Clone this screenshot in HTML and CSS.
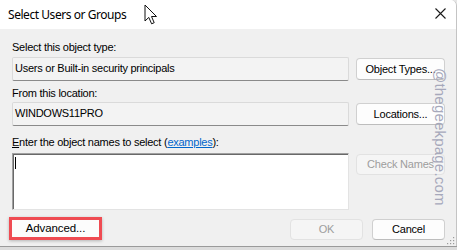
FILE: index.html
```html
<!DOCTYPE html>
<html>
<head>
<meta charset="utf-8">
<link rel="stylesheet" href="styles.css">
</head>
<body>
<div class="window">
  <div class="titlebar">
    <span class="title">Select Users or Groups</span>
    <svg class="close" width="11" height="11" viewBox="0 0 11 11"><path d="M0.5 0.5 L10.5 10.5 M10.5 0.5 L0.5 10.5" stroke="#1a1a1a" stroke-width="1.1" fill="none"/></svg>
  </div>
  <div class="content">
    <div class="label l1">Select this object type:</div>
    <div class="row">
      <div class="field">Users or Built-in security principals</div>
      <div class="btn">Object Types...</div>
    </div>
    <div class="label l2">From this location:</div>
    <div class="row">
      <div class="field">WINDOWS11PRO</div>
      <div class="btn">Locations...</div>
    </div>
    <div class="label l3"><span class="ak">E</span>nter the object names to select (<span class="link">examples</span>):</div>
    <div class="row">
      <div class="textarea"><span class="caret"></span></div>
      <div class="btn disabled">Check Names</div>
    </div>
    <div class="footer">
      <div class="hl"><div class="hl-btn">Advanced...</div></div>
      <div class="spacer"></div>
      <div class="btn small disabled">OK</div>
      <div class="btn small">Cancel</div>
    </div>
  </div>
  <div class="watermark">@thegeekpage.com</div>
  <svg class="cursor" width="14" height="22" viewBox="0 0 14 22"><path d="M1 1 L1 17 L4.8 13.4 L7.6 19.8 L10.2 18.7 L7.5 12.5 L12.5 12.5 Z" fill="#fff" stroke="#111" stroke-width="1" stroke-linejoin="round"/></svg>
  <svg class="grip" width="8" height="8" viewBox="0 0 8 8"><g fill="#9a9a9a"><rect x="6" y="0" width="1.2" height="1.2"/><rect x="3" y="3" width="1.2" height="1.2"/><rect x="6" y="3" width="1.2" height="1.2"/><rect x="0" y="6" width="1.2" height="1.2"/><rect x="3" y="6" width="1.2" height="1.2"/><rect x="6" y="6" width="1.2" height="1.2"/></g></svg>
</div>
<div class="below"></div>
</body>
</html>
```
FILE: styles.css
```css
html, body {
  margin: 0;
  padding: 0;
  width: 457px;
  height: 250px;
  overflow: hidden;
  background: #e6e6e6;
}
.window {
  position: relative;
  width: 456px;
  height: 246px;
  background: #f0f0f0;
  border-right: 1px solid #c4c4c4;
  border-top-right-radius: 6px;
  font-family: "Liberation Sans", Arial, sans-serif;
  font-size: 11px;
  color: #000;
  overflow: hidden;
}
.titlebar {
  height: 29px;
  background: #ffffff;
  display: flex;
  align-items: center;
  padding-left: 8px;
  padding-right: 10px;
  box-sizing: border-box;
}
.title {
  font-family: "Noto Sans", sans-serif;
  font-size: 12px;
  letter-spacing: -0.45px;
  flex: 1;
  margin-top: -1px;
}
.close {
  margin-right: 0px;
  margin-top: -2px;
}
.content {
  padding: 0 11px 0 12px;
  display: flex;
  flex-direction: column;
}
.label {
  height: 13px;
  line-height: 13px;
  letter-spacing: -0.25px;
  color: #000;
}
.l1 { margin-top: 12px; }
.l2 { margin-top: 6px; }
.l3 { margin-top: 10px; }
.ak { text-decoration: underline; }
.link { color: #0066cc; text-decoration: underline; }
.row {
  display: flex;
  align-items: flex-start;
  gap: 7px;
}
.l1 + .row { margin-top: 3px; }
.l2 + .row { margin-top: 2px; }
.l3 + .row { margin-top: 4px; }
.field {
  flex: 1;
  height: 24px;
  box-sizing: border-box;
  border: 1px solid #dadada;
  border-bottom: 1px solid #8a8a8a;
  border-radius: 2px;
  background: #f3f3f3;
  padding-left: 2px;
  line-height: 21px;
  letter-spacing: -0.25px;
}
.btn {
  width: 89px;
  height: 22px;
  margin-top: 1px;
  box-sizing: border-box;
  border: 1px solid #d0d0d0;
  border-bottom-color: #bdbdbd;
  border-radius: 4px;
  background: #fdfdfd;
  display: flex;
  align-items: center;
  justify-content: center;
  letter-spacing: -0.2px;
  padding-bottom: 1px;
}
.btn.disabled {
  color: #9d9d9d;
  background: #f5f5f5;
  border-color: #e2e2e2;
}
.textarea {
  flex: 1;
  height: 57px;
  box-sizing: border-box;
  background: #ffffff;
  border-left: 1px solid #a0a0a0;
  border-top: 1px solid #a0a0a0;
  border-right: 1px solid #e3e3e3;
  border-bottom: 1px solid #e3e3e3;
  box-shadow: inset 1px 1px 0 #696969;
  position: relative;
}
.caret {
  display: block;
  width: 1px;
  height: 12px;
  background: #000;
  margin: 3px 0 0 2px;
}
.row .textarea + .btn { height: 21px; }
.footer {
  display: flex;
  align-items: flex-start;
  margin-top: 7px;
  gap: 9px;
}
.hl {
  margin-left: -3px;
  margin-top: 0;
  border: 3px solid #ef4b52;
  width: 87px;
  height: 17px;
  box-shadow: 0 1px 3px rgba(0,0,0,0.25);
}
.hl-btn {
  height: 17px;
  background: #fcfcfc;
  display: flex;
  align-items: center;
  justify-content: center;
  letter-spacing: -0.1px;
  font-size: 11.5px;
  padding-bottom: 1px;
  box-sizing: border-box;
}
.spacer { flex: 1; }
.btn.small {
  width: 73px;
  height: 21px;
  margin-top: 2px;
}
.watermark {
  position: absolute;
  left: 432px;
  top: 68px;
  writing-mode: vertical-rl;
  font-family: "Liberation Sans", Arial, sans-serif;
  font-size: 15px;
  color: #a6a8bb;
  letter-spacing: 0.2px;
}
.cursor {
  position: absolute;
  left: 144px;
  top: 4px;
}
.grip {
  position: absolute;
  left: 447px;
  top: 237px;
}
.below {
  height: 4px;
  background: #dcdcdc;
  border-top: 1px solid #9a9a9a;
}
```
